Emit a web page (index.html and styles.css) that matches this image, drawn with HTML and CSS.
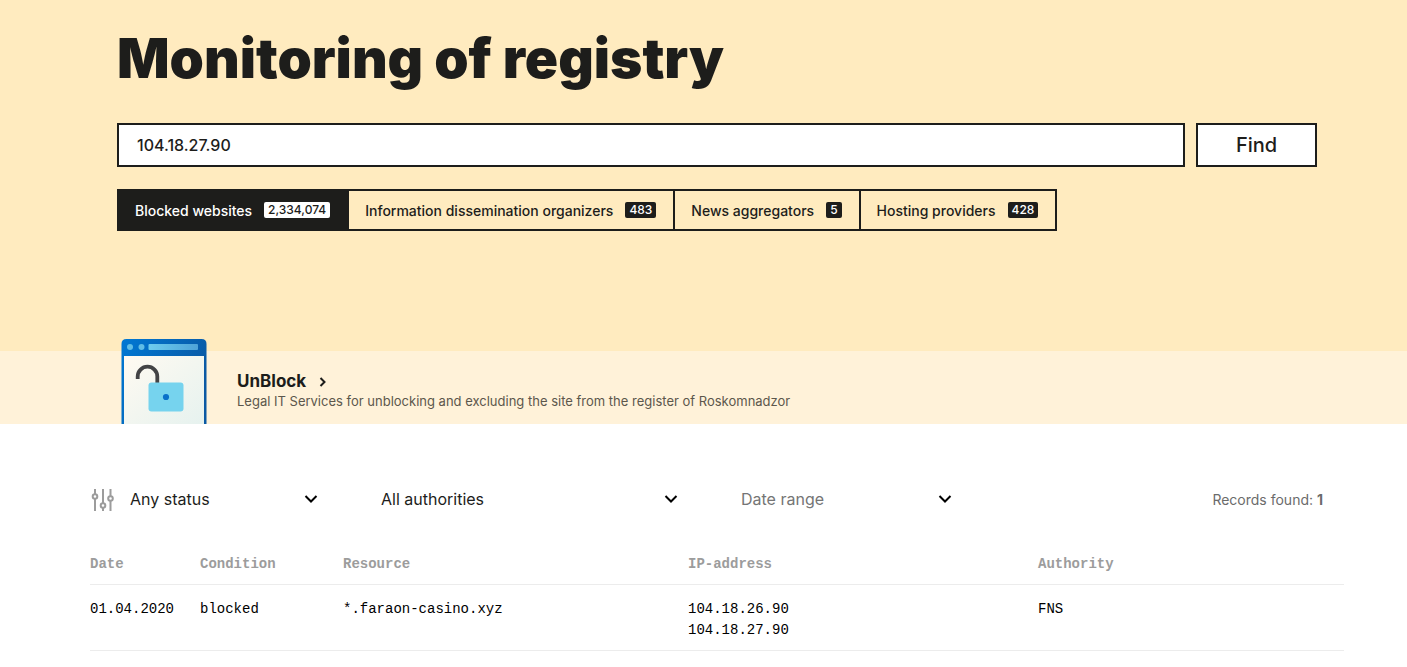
FILE: index.html
```
<!DOCTYPE html>
<html lang="en">
<head>
  <meta charset="UTF-8" />
  <title>Monitoring of registry</title>
  <meta name="viewport" content="width=device-width, initial-scale=1.0" />
  <link rel="stylesheet" href="styles.css">
</head>
<body>
  <header class="hero">
    <h1>Monitoring of registry</h1>
    <form class="search">
      <input type="text" class="search-input" value="104.18.27.90" aria-label="Search the registry" />
      <button type="submit" class="search-button">Find</button>
    </form>
    <nav class="tabs">
      <a href="#" class="tab active">Blocked websites <span class="count">2,334,074</span></a>
      <a href="#" class="tab">Information dissemination organizers <span class="count">483</span></a>
      <a href="#" class="tab">News aggregators <span class="count">5</span></a>
      <a href="#" class="tab">Hosting providers <span class="count">428</span></a>
    </nav>
  </header>

  <section class="promo">
    <svg class="promo-image" width="86" height="86" viewBox="0 0 86 86" aria-hidden="true">
      <defs>
        <linearGradient id="frame" x1="0" y1="0" x2="1" y2="0.4">
          <stop offset="0" stop-color="#0078d4" />
          <stop offset="1" stop-color="#0a59a4" />
        </linearGradient>
        <linearGradient id="sheet" x1="0" y1="0" x2="1" y2="1">
          <stop offset="0" stop-color="#fffaf1" />
          <stop offset="1" stop-color="#e6f2ef" />
        </linearGradient>
        <linearGradient id="bar" x1="0" y1="0" x2="1" y2="0">
          <stop offset="0" stop-color="#6dcdee" />
          <stop offset="1" stop-color="#4fa3d8" />
        </linearGradient>
      </defs>
      <path d="M0.500 86V6q0-5 5-5h75q5 0 5 5V86z" fill="url(#frame)" />
      <path d="M3 18h80V86H3z" fill="url(#sheet)" />
      <circle cx="9" cy="9" r="3" fill="#5fbde6" />
      <circle cx="20.500" cy="9" r="3" fill="#5fbde6" />
      <rect x="27.500" y="6" width="49.500" height="6" rx="1" fill="url(#bar)" />
      <path d="M16.700 41v-2.500a9.800 9.800 0 0 1 19.600 0V46" fill="none" stroke="#434345" stroke-width="3.800" />
      <rect x="27.500" y="44.500" width="35" height="29" rx="3" fill="#76d3ee" />
      <circle cx="45" cy="59" r="3.100" fill="#0a70ca" />
    </svg>
    <div class="promo-text">
      <a href="#" class="promo-title">
        UnBlock
        <svg width="8" height="12" viewBox="0 0 8 12" aria-hidden="true"><path d="M1.500 3l4 4-4 4" /></svg>
      </a>
      <p>Legal IT Services for unblocking and excluding the site from the register of Roskomnadzor</p>
    </div>
  </section>

  <main class="results">
    <div class="filters">
      <svg class="filter-icon" width="24" height="24" viewBox="0 0 24 24" aria-hidden="true">
        <path d="M5 2v5M5 12v12M13 2v14M13 21v3M20.500 2v7M20.500 14v10" />
        <circle cx="5" cy="9.500" r="2.300" />
        <circle cx="13" cy="18.500" r="2.300" />
        <circle cx="20.500" cy="11.500" r="2.300" />
      </svg>
      <div class="field status">
        <select aria-label="Status"><option>Any status</option></select>
        <svg class="chevron" width="14" height="10" viewBox="0 0 14 10" aria-hidden="true"><path d="M1.500 2L7 7.500 12.500 2" /></svg>
      </div>
      <div class="field authority">
        <select aria-label="Authority"><option>All authorities</option></select>
        <svg class="chevron" width="14" height="10" viewBox="0 0 14 10" aria-hidden="true"><path d="M1.500 2L7 7.500 12.500 2" /></svg>
      </div>
      <div class="field date">
        <input type="text" placeholder="Date range" aria-label="Date range" />
        <svg class="chevron" width="14" height="10" viewBox="0 0 14 10" aria-hidden="true"><path d="M1.500 2L7 7.500 12.500 2" /></svg>
      </div>
      <p class="total">Records found: <b>1</b></p>
    </div>

    <table>
      <thead>
        <tr>
          <th class="col-date">Date</th>
          <th class="col-condition">Condition</th>
          <th class="col-resource">Resource</th>
          <th class="col-ip">IP-address</th>
          <th>Authority</th>
        </tr>
      </thead>
      <tbody>
        <tr>
          <td>01.04.2020</td>
          <td>blocked</td>
          <td>*.faraon-casino.xyz</td>
          <td>104.18.26.90<br>104.18.27.90</td>
          <td>FNS</td>
        </tr>
      </tbody>
    </table>
  </main>
</body>
</html>
```
FILE: styles.css
```
* {
  box-sizing: border-box;
}

body {
  margin: 0;
  font-family: Inter, sans-serif;
  background: #fff;
  color: #1d1d1b;
}

h1, p {
  margin: 0;
}

a {
  color: inherit;
  text-decoration: none;
}

.hero {
  padding: 24px 90px 120px 117px;
  background: #ffebbf;
}

h1 {
  margin-bottom: 31px;
  font-size: 55px;
  line-height: 68px;
  font-weight: 900;
}

.search {
  display: flex;
  gap: 11px;
  margin-bottom: 22px;
}

.search-input {
  flex: 1;
  min-width: 0;
  height: 44px;
  padding: 0 18px;
  border: 2px solid #1d1d1b;
  border-radius: 0;
  background: #fff;
  font: 500 16px Inter, sans-serif;
  color: #1d1d1b;
}

.search-button {
  width: 121px;
  height: 44px;
  border: 2px solid #1d1d1b;
  background: #fff;
  font: 500 20px Inter, sans-serif;
  color: #1d1d1b;
  cursor: pointer;
}

.tabs {
  display: inline-flex;
  vertical-align: top;
  border: 2px solid #1d1d1b;
}

.tab {
  display: flex;
  align-items: center;
  gap: 12px;
  height: 38px;
  padding: 0 17px 0 16px;
  font-size: 14px;
  font-weight: 500;
  white-space: nowrap;
}

.tab + .tab {
  border-left: 2px solid #1d1d1b;
}

.tab.active {
  background: #1d1d1b;
  color: #fff;
}

.count {
  padding: 0 4px;
  border-radius: 2px;
  background: #1d1d1b;
  color: #fff;
  font-size: 12px;
  line-height: 16px;
}

.active .count {
  background: #fff;
  color: #1d1d1b;
}

.promo {
  display: flex;
  align-items: flex-end;
  gap: 30px;
  height: 73px;
  padding: 0 90px 0 121px;
  background: #fff2d9;
}

.promo-image {
  flex-shrink: 0;
}

.promo-text {
  padding-bottom: 14px;
}

.promo-title {
  display: flex;
  align-items: center;
  gap: 13px;
  font-size: 17px;
  line-height: 22px;
  font-weight: 700;
}

.promo-title svg {
  fill: none;
  stroke: #1d1d1b;
  stroke-width: 2;
}

.promo p {
  font-size: 13px;
  line-height: 18px;
  color: #5c574c;
}

.results {
  padding: 60px 63px 16px 90px;
}

.filters {
  display: flex;
  align-items: center;
  margin-bottom: 28px;
  padding-right: 21px;
}

.filter-icon {
  margin-right: 16px;
  fill: none;
  stroke: #9c9c9c;
  stroke-width: 2;
}

.field {
  position: relative;
  margin-right: 63px;
}

.field select,
.field input {
  display: block;
  width: 100%;
  height: 30px;
  padding: 0;
  border: 0;
  background: transparent;
  font: 16px Inter, sans-serif;
  color: #1d1d1b;
  appearance: none;
}

.field input::placeholder {
  color: #757575;
  opacity: 1;
}

.status {
  width: 188px;
}

.authority {
  width: 297px;
}

.date {
  width: 211px;
}

.chevron {
  position: absolute;
  top: 10px;
  right: 0;
  fill: none;
  stroke: #000;
  stroke-width: 2;
  pointer-events: none;
}

.total {
  margin-left: auto;
  font-size: 14px;
  color: #6b6b6b;
}

table {
  width: 100%;
  border-collapse: collapse;
  table-layout: fixed;
  font-family: "Liberation Mono", monospace;
  font-size: 14px;
  line-height: 21px;
}

th, td {
  border-bottom: 1px solid #ececec;
  text-align: left;
  vertical-align: top;
}

th {
  padding: 12px 0 9px;
  font-weight: 700;
  color: #9c9c9c;
}

td {
  padding: 14px 0 9px;
  color: #000;
}

.col-date {
  width: 110px;
}

.col-condition {
  width: 143px;
}

.col-resource {
  width: 345px;
}

.col-ip {
  width: 350px;
}
```
